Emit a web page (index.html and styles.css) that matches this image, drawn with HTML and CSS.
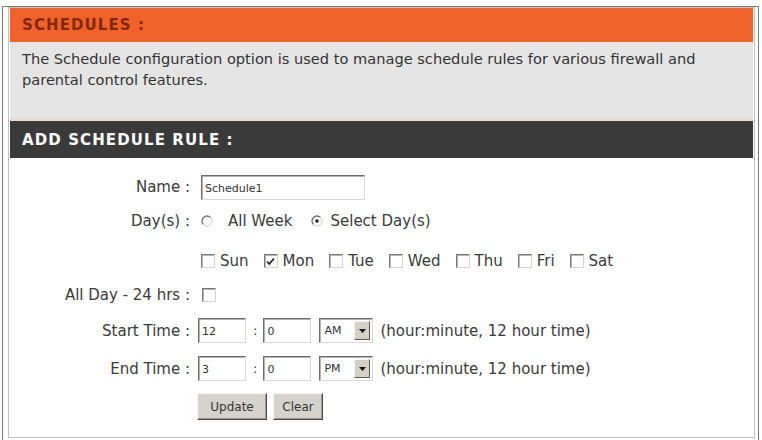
FILE: index.html
```html
<!DOCTYPE html>
<html>
<head>
<meta charset="utf-8">
<link rel="stylesheet" href="styles.css">
</head>
<body>
<div class="frame">
  <div class="panel">
    <div class="head head-orange">SCHEDULES :</div>
    <div class="desc">The Schedule configuration option is used to manage schedule rules for various firewall and parental control features.</div>
    <div class="head head-dark">ADD SCHEDULE RULE :</div>
    <div class="form">
      <div class="lbl">Name :</div>
      <div class="ctl"><input class="txt txt-name" type="text" value="Schedule1"></div>

      <div class="lbl">Day(s) :</div>
      <div class="ctl">
        <span class="radio"><svg width="12" height="12" viewBox="0 0 12 12"><circle cx="6" cy="6" r="5" fill="#fff"/><path d="M2.46 9.54A5 5 0 0 1 9.54 2.46" fill="none" stroke="#6f6f6f" stroke-width="1.3"/><path d="M9.54 2.46A5 5 0 0 1 2.46 9.54" fill="none" stroke="#dcdcdc" stroke-width="1.3"/></svg></span>
        <span class="opt opt-all">All Week</span>
        <span class="radio"><svg width="12" height="12" viewBox="0 0 12 12"><circle cx="6" cy="6" r="5" fill="#fff"/><path d="M2.46 9.54A5 5 0 0 1 9.54 2.46" fill="none" stroke="#6f6f6f" stroke-width="1.3"/><path d="M9.54 2.46A5 5 0 0 1 2.46 9.54" fill="none" stroke="#dcdcdc" stroke-width="1.3"/><circle cx="6" cy="6" r="1.8" fill="#222"/></svg></span>
        <span class="opt opt-sel">Select Day(s)</span>
      </div>

      <div class="lbl"></div>
      <div class="ctl days">
        <span class="day"><span class="cb"></span>Sun</span>
        <span class="day"><span class="cb"><svg width="11" height="11" viewBox="0 0 11 11"><polyline points="2,5.5 4.3,8 9,2.5" fill="none" stroke="#222" stroke-width="1.7"/></svg></span>Mon</span>
        <span class="day"><span class="cb"></span>Tue</span>
        <span class="day"><span class="cb"></span>Wed</span>
        <span class="day"><span class="cb"></span>Thu</span>
        <span class="day"><span class="cb"></span>Fri</span>
        <span class="day"><span class="cb"></span>Sat</span>
      </div>

      <div class="lbl">All Day - 24 hrs :</div>
      <div class="ctl"><span class="cb cb-allday"></span></div>

      <div class="lbl">Start Time :</div>
      <div class="ctl">
        <input class="txt txt-time" type="text" value="12">
        <span class="colon">:</span>
        <input class="txt txt-time" type="text" value="0">
        <span class="sel"><span class="sel-val">AM</span><span class="sel-btn"><svg width="7" height="4" viewBox="0 0 7 4"><polygon points="0,0 7,0 3.5,4" fill="#111"/></svg></span></span>
        <span class="hint">(hour:minute, 12 hour time)</span>
      </div>

      <div class="lbl">End Time :</div>
      <div class="ctl">
        <input class="txt txt-time" type="text" value="3">
        <span class="colon">:</span>
        <input class="txt txt-time" type="text" value="0">
        <span class="sel"><span class="sel-val">PM</span><span class="sel-btn"><svg width="7" height="4" viewBox="0 0 7 4"><polygon points="0,0 7,0 3.5,4" fill="#111"/></svg></span></span>
        <span class="hint">(hour:minute, 12 hour time)</span>
      </div>

      <div class="lbl"></div>
      <div class="ctl btns">
        <button class="btn btn-update" type="button">Update</button>
        <button class="btn btn-clear" type="button">Clear</button>
      </div>
    </div>
  </div>
</div>
</body>
</html>
```

FILE: styles.css
```css
html, body {
  margin: 0;
  padding: 0;
}
body {
  width: 762px;
  height: 440px;
  overflow: hidden;
  background: #fff;
  font-family: "DejaVu Sans", Verdana, sans-serif;
  color: #3a3a3a;
}
.frame {
  margin: 6px 3px 0 2px;
  border: 1px solid #7a7a7a;
  border-bottom: 0;
  padding: 0 3px 0 5px;
  height: 434px;
  box-sizing: border-box;
}
.panel {
  border: 1px solid #c2c2c2;
  padding: 0 1px;
  height: 431px;
  box-sizing: border-box;
  display: flex;
  flex-direction: column;
}
.head {
  display: flex;
  align-items: center;
  padding-left: 12px;
  font-weight: bold;
  font-size: 15px;
  letter-spacing: 1.1px;
  flex: none;
}
.head-orange {
  height: 34px;
  background: #f0622a;
  color: #84280d;
}
.desc {
  height: 79px;
  box-sizing: border-box;
  background: #e5e5e5;
  border-bottom: 3px solid #eed9ce;
  padding: 6px 12px 0 12px;
  font-size: 14.6px;
  line-height: 21px;
  color: #333;
  flex: none;
}
.head-dark {
  height: 37px;
  background: #3a3a3a;
  color: #fff;
}
.form {
  padding-top: 12px;
  display: grid;
  grid-template-columns: 180px auto;
  grid-template-rows: 34px 34px 46px 22px 49px 27px 49px;
  column-gap: 8px;
  align-items: center;
  font-size: 15px;
}
.lbl {
  text-align: right;
  white-space: nowrap;
}
.ctl {
  display: flex;
  align-items: center;
  white-space: nowrap;
}
.txt {
  box-sizing: border-box;
  height: 25px;
  border: 1px solid;
  border-color: #6c6c6c #d9d9d9 #d9d9d9 #6c6c6c;
  box-shadow: inset 1px 1px 0 #b4b4b4;
  padding: 2px 0 0 3px;
  font-family: "DejaVu Sans", Verdana, sans-serif;
  font-size: 11px;
  color: #333;
  background: #fff;
  outline: none;
  margin: 0;
}
.txt-name {
  width: 164px;
  margin-left: 3px;
}
.txt-time {
  width: 48px;
}
.colon {
  margin: 0 6px 0 7px;
  font-size: 13px;
}
.radio {
  display: inline-flex;
  width: 12px;
  height: 12px;
}
.radio:first-child {
  margin-left: 3px;
}
.opt-all {
  margin-left: 15px;
  margin-right: 19px;
}
.opt-sel {
  margin-left: 7px;
}
.days {
  gap: 15px;
  padding-left: 3px;
}
.day {
  display: inline-flex;
  align-items: center;
}
.cb {
  box-sizing: border-box;
  display: inline-flex;
  align-items: center;
  justify-content: center;
  width: 14px;
  height: 14px;
  border: 1px solid;
  border-color: #777 #d4d4d4 #d4d4d4 #777;
  box-shadow: inset 1px 1px 0 #b8b8b8;
  background: #fff;
  margin-right: 5px;
}
.cb-allday {
  margin-left: 4px;
}
.sel {
  box-sizing: border-box;
  display: inline-flex;
  align-items: center;
  justify-content: space-between;
  width: 54px;
  height: 25px;
  margin-left: 8px;
  border: 1px solid;
  border-color: #6c6c6c #d9d9d9 #d9d9d9 #6c6c6c;
  box-shadow: inset 1px 1px 0 #b4b4b4;
  background: #fff;
  padding: 1px 2px 1px 4px;
}
.sel-val {
  font-size: 11px;
  color: #333;
}
.sel-btn {
  box-sizing: border-box;
  display: inline-flex;
  align-items: center;
  justify-content: center;
  width: 16px;
  height: 19px;
  background: #d4d0c8;
  border: 1px solid;
  border-color: #f4f4f4 #5a5a5a #5a5a5a #f4f4f4;
}
.hint {
  margin-left: 7px;
}
.btns {
  gap: 6px;
}
.btn {
  box-sizing: border-box;
  height: 27px;
  margin: 0;
  padding: 0;
  background: #d6d3cc;
  border: 1px solid;
  border-color: #f6f6f6 #4a4a4a #4a4a4a #f6f6f6;
  box-shadow: inset -1px -1px 0 #9a9a9a;
  font-family: "DejaVu Sans", Verdana, sans-serif;
  font-size: 12px;
  color: #333;
}
.btn-update {
  width: 70px;
  margin-left: -1px;
}
.btn-clear {
  width: 50px;
}
```
